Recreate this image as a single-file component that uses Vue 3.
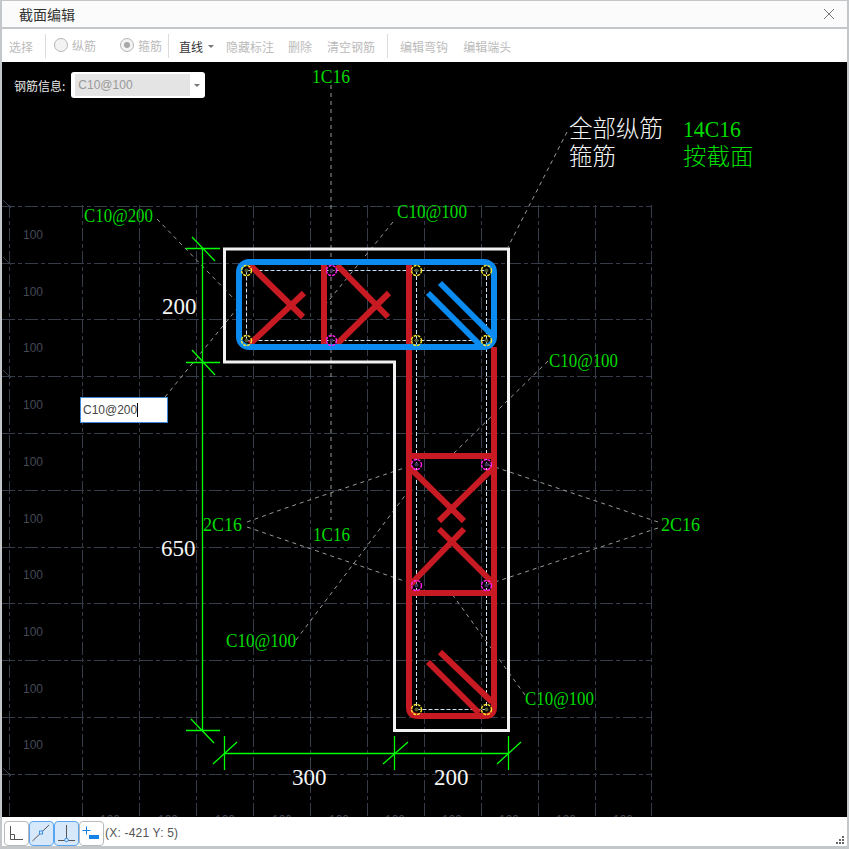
<script setup>
const gridX = [82, 139, 196, 253, 310, 367, 424, 481, 538, 595, 651]
const gridY = [206, 263, 319, 376, 433, 490, 547, 603, 660, 717, 774]
const tickY = [206, 263, 376, 774]
const rowLabels = [239, 296, 352, 409, 466, 523, 579, 636, 693, 749]
const colLabels = [110, 168, 225, 282, 339, 395, 452, 509, 566, 623]

const leaders = [
  '331,85 331,520',
  '567,132 508,247',
  '157,219 235,300',
  '165,397 240,305',
  '393,222 325,305',
  '548,361 451,456',
  '296,640 410,489',
  '525,695 452,594',
  '247,522 283,509 413,465',
  '247,527 413,584',
  '658,522 486,464',
  '658,528 486,585',
]

// dimension lines, extension ticks and slashes
const dims = [
  [202.5, 248, 202.5, 730], [186, 248.5, 220, 248.5], [186, 362.5, 220, 362.5], [186, 730.5, 220, 730.5],
  [192, 237, 215, 261], [192, 350, 215, 375], [191, 719, 214, 743],
  [224.5, 753.5, 508.5, 753.5], [224.5, 736, 224.5, 770], [394.5, 736, 394.5, 770], [508.5, 736, 508.5, 770],
  [213, 764, 237, 742], [383, 764, 408, 742], [497, 764, 521, 742],
]

const redBars = [
  [324, 265, 324, 345], [250, 265, 303, 317], [250, 344, 304, 293],
  [337, 265, 388, 317], [337, 344, 389, 293],
  [409, 456, 494, 456], [409, 593, 494, 593],
  [410, 468, 464, 521], [493, 468, 439, 521], [410, 585, 464, 529], [493, 583, 439, 529],
  [440, 652, 492, 702], [428, 662, 479, 713],
]
const yellowBars = [[246, 270], [246, 340], [416, 270], [486, 270], [416, 340], [486, 340], [416, 709], [486, 709]]
const pinkBars = [[331, 270], [331, 340], [416, 464], [486, 464], [416, 585], [486, 585]]

const greenLabels = [
  { t: '1C16', x: 312, y: 83, w: 38 },
  { t: 'C10@200', x: 84, y: 222, w: 69 },
  { t: 'C10@100', x: 397, y: 218, w: 70 },
  { t: 'C10@100', x: 549, y: 367, w: 69 },
  { t: '2C16', x: 203, y: 531, w: 39 },
  { t: '2C16', x: 661, y: 531, w: 39 },
  { t: '1C16', x: 313, y: 541, w: 37 },
  { t: 'C10@100', x: 226, y: 647, w: 70 },
  { t: 'C10@100', x: 525, y: 705, w: 69 },
]
const sizeLabels = [
  { t: '200', x: 162, y: 314 },
  { t: '650', x: 161, y: 556 },
  { t: '300', x: 292, y: 785 },
  { t: '200', x: 434, y: 785 },
]
</script>

<template>
  <div class="window">
    <header class="title-bar">
      <span class="title">截面编辑</span>
      <svg class="close" width="12" height="12" viewBox="0 0 12 12">
        <path d="M1 1L11 11M11 1L1 11" stroke="#777" stroke-width="1" fill="none" />
      </svg>
    </header>

    <div class="toolbar">
      <span class="tool first">选择</span>
      <i class="sep"></i>
      <span class="radio-item r1"><i class="radio"></i>纵筋</span>
      <span class="radio-item r2"><i class="radio checked"></i>箍筋</span>
      <i class="sep s2"></i>
      <span class="line-select">直线<i class="caret"></i></span>
      <span class="tool t1">隐藏标注</span>
      <span class="tool t2">删除</span>
      <span class="tool t2b">清空钢筋</span>
      <i class="sep s3"></i>
      <span class="tool t3">编辑弯钩</span>
      <span class="tool t4">编辑端头</span>
    </div>

    <div class="canvas">
      <svg class="drawing" width="845" height="755" viewBox="2 62 845 755">
        <g class="grid">
          <line v-for="x in gridX" :key="'gx' + x" :x1="x + 0.5" y1="205" :x2="x + 0.5" y2="817" />
          <line x1="9.5" y1="205" x2="9.5" y2="817" />
          <line v-for="y in gridY" :key="'gy' + y" x1="2" :y1="y + 0.5" x2="651" :y2="y + 0.5" />
        </g>
        <g class="grid-ticks">
          <line v-for="y in tickY" :key="'t' + y" x1="3" :y1="y - 6" x2="11" :y2="y + 2" />
        </g>
        <text v-for="y in rowLabels" :key="'r' + y" class="grid-label" x="23" :y="y">100</text>
        <text v-for="x in colLabels" :key="'c' + x" class="grid-label" :x="x - 10" y="824">100</text>

        <polyline v-for="p in leaders" :key="p" class="leader" :points="p" />

        <path class="outline" d="M224.5 249H508.5V730.5H394.5V362H224.5Z" />

        <path class="rebar-path" d="M246.5 270.5H486.5M246.5 340.5H486.5M246.5 270.5V340.5M416.5 270V709M486.5 270V709M416.5 709.5H486.5" />

        <path class="red" d="M409 265V707Q409 716 418 716H485Q494 716 494 707V347" />
        <line v-for="(b, i) in redBars" :key="'rb' + i" class="red" :x1="b[0]" :y1="b[1]" :x2="b[2]" :y2="b[3]" />

        <rect class="blue" x="239" y="262" width="255" height="85" rx="10" />
        <line class="blue" x1="440" y1="283" x2="494" y2="337" />
        <line class="blue" x1="428" y1="293" x2="481" y2="346" />

        <g v-for="b in yellowBars" :key="'y' + b[0] + b[1]">
          <circle class="bar yellow" :cx="b[0] + 0.5" :cy="b[1] + 0.5" r="5" />
          <circle class="bar-core" :cx="b[0] + 0.5" :cy="b[1] + 0.5" r="2" />
        </g>
        <g v-for="b in pinkBars" :key="'p' + b[0] + b[1]">
          <circle class="bar pink" :cx="b[0] + 0.5" :cy="b[1] + 0.5" r="5" />
          <circle class="bar-core dark" :cx="b[0] + 0.5" :cy="b[1] + 0.5" r="2" />
        </g>

        <g class="dim">
          <line v-for="(d, i) in dims" :key="'d' + i" :x1="d[0]" :y1="d[1]" :x2="d[2]" :y2="d[3]" />
        </g>

        <text
          v-for="(l, i) in greenLabels"
          :key="'g' + i"
          class="label green"
          :x="l.x"
          :y="l.y"
          :textLength="l.w"
          lengthAdjust="spacingAndGlyphs"
        >{{ l.t }}</text>
        <text v-for="(l, i) in sizeLabels" :key="'s' + i" class="size" :x="l.x" :y="l.y">{{ l.t }}</text>

        <text class="big white" x="569" y="137">全部纵筋</text>
        <text class="big white" x="569" y="165">箍筋</text>
        <text class="big green" x="683" y="137" textLength="58" lengthAdjust="spacingAndGlyphs">14C16</text>
        <text class="big green" x="683" y="165">按截面</text>
      </svg>

      <div class="info">
        <span class="info-label">钢筋信息:</span>
        <div class="info-select">
          <span class="info-value">C10@100</span>
          <i class="caret"></i>
        </div>
      </div>

      <div class="edit-box"><span class="edit-text">C10@200</span></div>
    </div>

    <footer class="status">
      <button class="snap">
        <svg width="23" height="23" viewBox="0 0 23 23"><path d="M5.5 4V17.5H18M5.5 12.5H9.5V17.5" fill="none" stroke="#555" /></svg>
      </button>
      <button class="snap active">
        <svg width="23" height="23" viewBox="0 0 23 23">
          <path d="M2.5 19L19 3" fill="none" stroke="#555" />
          <rect x="9.5" y="9" width="3" height="3" fill="#d8e8fb" stroke="#3a8fe8" />
        </svg>
      </button>
      <button class="snap active">
        <svg width="23" height="23" viewBox="0 0 23 23">
          <path d="M11.5 3V18M3 18.5H20" fill="none" stroke="#555" />
          <circle cx="11.5" cy="18" r="1.8" fill="#d8e8fb" stroke="#3a8fe8" />
        </svg>
      </button>
      <button class="snap">
        <svg width="23" height="23" viewBox="0 0 23 23">
          <path d="M6.5 4.5V12.5M2.5 8.5H10.5" fill="none" stroke="#1583e6" />
          <rect x="9" y="13" width="10" height="4" fill="#1583e6" />
        </svg>
      </button>
      <span class="coords">(X: -421 Y: 5)</span>
      <svg class="grip" width="9" height="9" viewBox="0 0 9 9">
        <path d="M7 0h2v2H7zM4 3h2v2H4zM7 3h2v2H7zM1 6h2v2H1zM4 6h2v2H4zM7 6h2v2H7z" fill="#666" />
      </svg>
    </footer>
  </div>
</template>

<style scoped>
.window {
  width: 849px;
  height: 849px;
  box-sizing: border-box;
  border: 2px solid #c4c7ca;
  border-top-width: 1px;
  border-bottom-width: 3px;
  display: flex;
  flex-direction: column;
  background: #fff;
  font-family: "Noto Sans CJK SC", "Liberation Sans", sans-serif;
  overflow: hidden;
}
.title-bar {
  height: 26px;
  flex: none;
  display: flex;
  align-items: center;
  justify-content: space-between;
  padding: 0 12px 0 17px;
  background: #fbfbfb;
  border-bottom: 2px solid #c4c7ca;
}
.title {
  font-size: 14px;
  color: #333;
}
.toolbar {
  height: 33px;
  flex: none;
  box-sizing: border-box;
  margin-left: 1px;
  display: flex;
  align-items: center;
  font-size: 12px;
  color: #bbb;
  background: #fff;
}
.tool {
  white-space: nowrap;
  padding-top: 2px;
}
.first { margin-left: 6px; }
.sep {
  width: 1px;
  height: 24px;
  background: #dcdcdc;
  margin-left: 12px;
}
.s2 { margin-left: 6px; }
.s3 { margin-left: 12px; }
.radio-item {
  display: flex;
  align-items: center;
  gap: 4px;
}
.r1 { margin-left: 8px; }
.r2 { margin-left: 24px; }
.radio {
  width: 14px;
  height: 14px;
  box-sizing: border-box;
  border: 1px solid #b5b5b5;
  border-radius: 50%;
  background: #f3f3f3;
  display: block;
  position: relative;
  margin-top: -2px;
}
.radio.checked::after {
  content: "";
  position: absolute;
  left: 3px;
  top: 3px;
  width: 6px;
  height: 6px;
  border-radius: 50%;
  background: #a8a8a8;
}
.line-select {
  display: flex;
  align-items: center;
  margin-left: 10px;
  color: #333;
  padding-top: 1px;
}
.caret {
  display: block;
  width: 0;
  height: 0;
  border-left: 3px solid transparent;
  border-right: 3px solid transparent;
  border-top: 3px solid #777;
}
.line-select .caret { margin-left: 5px; }
.t1 { margin-left: 12px; }
.t2 { margin-left: 14px; }
.t2b { margin-left: 15px; }
.t3 { margin-left: 12px; }
.t4 { margin-left: 15px; }

.canvas {
  position: relative;
  height: 755px;
  flex: none;
  background: #000;
  overflow: hidden;
}
.drawing {
  display: block;
}
.grid line {
  stroke: #363c4a;
  stroke-width: 1;
  stroke-dasharray: 13 3 4 3;
}
.grid-ticks line {
  stroke: #363c4a;
  stroke-width: 1;
}
.grid-label {
  font-family: "Liberation Sans", sans-serif;
  font-size: 12px;
  fill: #434956;
}
.leader {
  fill: none;
  stroke: #9a9a9a;
  stroke-width: 1;
  stroke-dasharray: 4 4;
}
.outline {
  fill: none;
  stroke: #f2f2f2;
  stroke-width: 3;
}
.rebar-path {
  fill: none;
  stroke: #cfe2f5;
  stroke-width: 1;
  stroke-dasharray: 4 2;
}
.red {
  fill: none;
  stroke: #c71a22;
  stroke-width: 6;
}
.blue {
  fill: none;
  stroke: #0b8bef;
  stroke-width: 6;
}
.bar {
  fill: none;
  stroke-width: 1.4;
  stroke-dasharray: 3 1;
}
.yellow { stroke: #f8e82c; }
.pink { stroke: #ff22ee; }
.bar-core { fill: #505a30; }
.bar-core.dark { fill: #40305a; }
.dim line {
  stroke: #00ff00;
  stroke-width: 1.3;
}
.label {
  font-family: "Liberation Serif", serif;
  font-size: 19px;
}
.green { fill: #00dc00; }
.white { fill: #f5f5f5; }
.size {
  font-family: "Liberation Serif", serif;
  font-size: 23px;
  fill: #f5f5f5;
}
.big {
  font-family: "Liberation Serif", "Noto Sans CJK SC", serif;
  font-size: 23.5px;
  font-weight: 300;
}

.info {
  position: absolute;
  left: 12px;
  top: 10px;
  display: flex;
  align-items: center;
  gap: 6px;
}
.info-label {
  font-size: 12px;
  color: #e8e8e8;
}
.info-select {
  width: 134px;
  height: 26px;
  box-sizing: border-box;
  padding: 2px 5px 2px 4px;
  background: #fff;
  border-radius: 3px;
  display: flex;
  align-items: center;
  justify-content: space-between;
}
.info-value {
  width: 115px;
  height: 22px;
  box-sizing: border-box;
  padding-left: 3px;
  line-height: 22px;
  background: #e4e4e4;
  color: #999;
  font-family: "Liberation Sans", sans-serif;
  font-size: 12px;
}
.edit-box {
  position: absolute;
  left: 78px;
  top: 335px;
  width: 88px;
  height: 26px;
  box-sizing: border-box;
  padding-left: 2px;
  background: #fff;
  border: 1px solid #3d86d8;
  display: flex;
  align-items: center;
}
.edit-text {
  font-family: "Liberation Sans", sans-serif;
  font-size: 12px;
  color: #444;
  line-height: 14px;
  border-right: 1px solid #000;
}

.status {
  flex: 1;
  min-height: 0;
  display: flex;
  align-items: center;
  padding-left: 2px;
  background: #fff;
  position: relative;
}
.snap {
  width: 25px;
  height: 25px;
  padding: 0;
  box-sizing: border-box;
  background: #fff;
  border: 1px solid #b9b9b9;
  border-radius: 4px;
  display: block;
  margin-top: 3px;
}
.snap svg {
  display: block;
}
.snap.active {
  background: #d8e8fb;
  border-color: #5aa5f0;
}
.coords {
  margin-left: 1px;
  margin-top: 2px;
  font-family: "Liberation Sans", sans-serif;
  font-size: 12px;
  letter-spacing: 0.2px;
  color: #555;
}
.grip {
  position: absolute;
  right: 3px;
  bottom: 1px;
}
</style>

<style>
html, body {
  margin: 0;
  background: #fff;
  overflow: hidden;
}
</style>
